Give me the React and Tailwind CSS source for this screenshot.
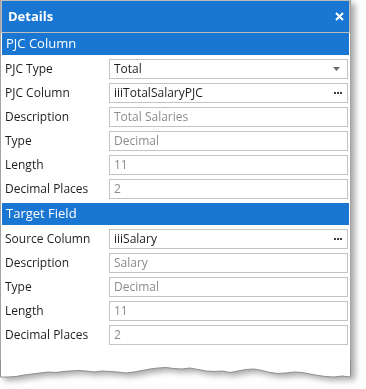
const sections = [
  {
    title: 'PJC Column',
    rows: [
      { label: 'PJC Type', value: 'Total', kind: 'select' },
      { label: 'PJC Column', value: 'iiiTotalSalaryPJC', kind: 'browse' },
      { label: 'Description', value: 'Total Salaries', kind: 'disabled' },
      { label: 'Type', value: 'Decimal', kind: 'disabled' },
      { label: 'Length', value: '11', kind: 'disabled' },
      { label: 'Decimal Places', value: '2', kind: 'disabled' },
    ],
  },
  {
    title: 'Target Field',
    rows: [
      { label: 'Source Column', value: 'iiiSalary', kind: 'browse' },
      { label: 'Description', value: 'Salary', kind: 'disabled' },
      { label: 'Type', value: 'Decimal', kind: 'disabled' },
      { label: 'Length', value: '11', kind: 'disabled' },
      { label: 'Decimal Places', value: '2', kind: 'disabled' },
    ],
  },
];

// ragged bottom edge of the cut-off screenshot
const tornEdge =
  'M0.5,0 L0.5,17 L8,17 L16,16.5 L24,15 L32,14 L40,13 L48,12 L56,12.5 L63,11.5 L70,11 L78,10.5 L86,11 L94,12 L102,11 L110,11.5 L118,12 L126,13 L134,12 L142,10.5 L150,9 L158,8 L166,7.5 L174,8.5 L182,9 L190,8 L198,9.5 L206,11 L214,11.5 L222,11 L230,12.5 L238,11 L246,9.5 L254,9 L262,10.5 L270,12.5 L278,13.5 L286,13 L294,12 L302,12.5 L310,14 L318,15.5 L326,16.5 L334,17 L342,16 L350.5,17 L350.5,0';

function Field({ row }) {
  const muted = row.kind === 'disabled';
  return (
    <div className="flex-1 h-[20px] mr-[2px] border border-[#c3c3c3] bg-white flex items-center pl-[4px] pr-[5px]">
      <span className={`flex-1 truncate ${muted ? 'text-[#8c8c8c]' : 'text-[#1e1e1e]'}`}>{row.value}</span>
      {row.kind === 'select' && (
        <svg width="7" height="4" viewBox="0 0 7 4" className="mr-[2px]">
          <path d="M0 0 H7 L3.5 4 Z" fill="#6b6b6b" />
        </svg>
      )}
      {row.kind === 'browse' && (
        <div className="flex gap-[1px]">
          <span className="w-[2px] h-[2px] bg-[#3c3c3c]" />
          <span className="w-[2px] h-[2px] bg-[#3c3c3c]" />
          <span className="w-[2px] h-[2px] bg-[#3c3c3c]" />
        </div>
      )}
    </div>
  );
}

export default function App() {
  return (
    <div className="w-[366px] h-[389px] bg-white overflow-hidden" style={{ fontFamily: '"Open Sans", "Noto Sans", sans-serif' }}>
      <div className="w-[351px] drop-shadow-[4px_3px_3px_rgba(0,0,0,0.35)]">
        <div className="bg-white border-x border-[#a3a3a3] text-[12px] text-[#1e1e1e]">
          <div className="h-[33px] bg-[#1976d2] border border-[#bdbdbd] flex items-center justify-between pl-[6px] pr-[5px]">
            <span className="text-white font-bold text-[13px]">Details</span>
            <svg width="9" height="9" viewBox="0 0 9 9">
              <path d="M1 1 L8 8 M8 1 L1 8" stroke="white" strokeWidth="2" />
            </svg>
          </div>
          {sections.map((s) => (
            <div key={s.title}>
              <div className="h-[22px] bg-[#1976d2] text-white text-[13px] flex items-center pl-[4px] mx-[1px]">{s.title}</div>
              <div className="py-[2px]">
                {s.rows.map((r) => (
                  <div key={s.title + r.label} className="h-[24px] flex items-center">
                    <div className="w-[108px] pl-[4px] shrink-0">{r.label}</div>
                    <Field row={r} />
                  </div>
                ))}
              </div>
            </div>
          ))}
          <div className="h-[11px]" />
        </div>
        <svg width="351" height="20" viewBox="0 0 351 20" className="block">
          <path d={tornEdge} fill="white" stroke="#8e8e8e" strokeWidth="1" />
        </svg>
      </div>
    </div>
  );
}
